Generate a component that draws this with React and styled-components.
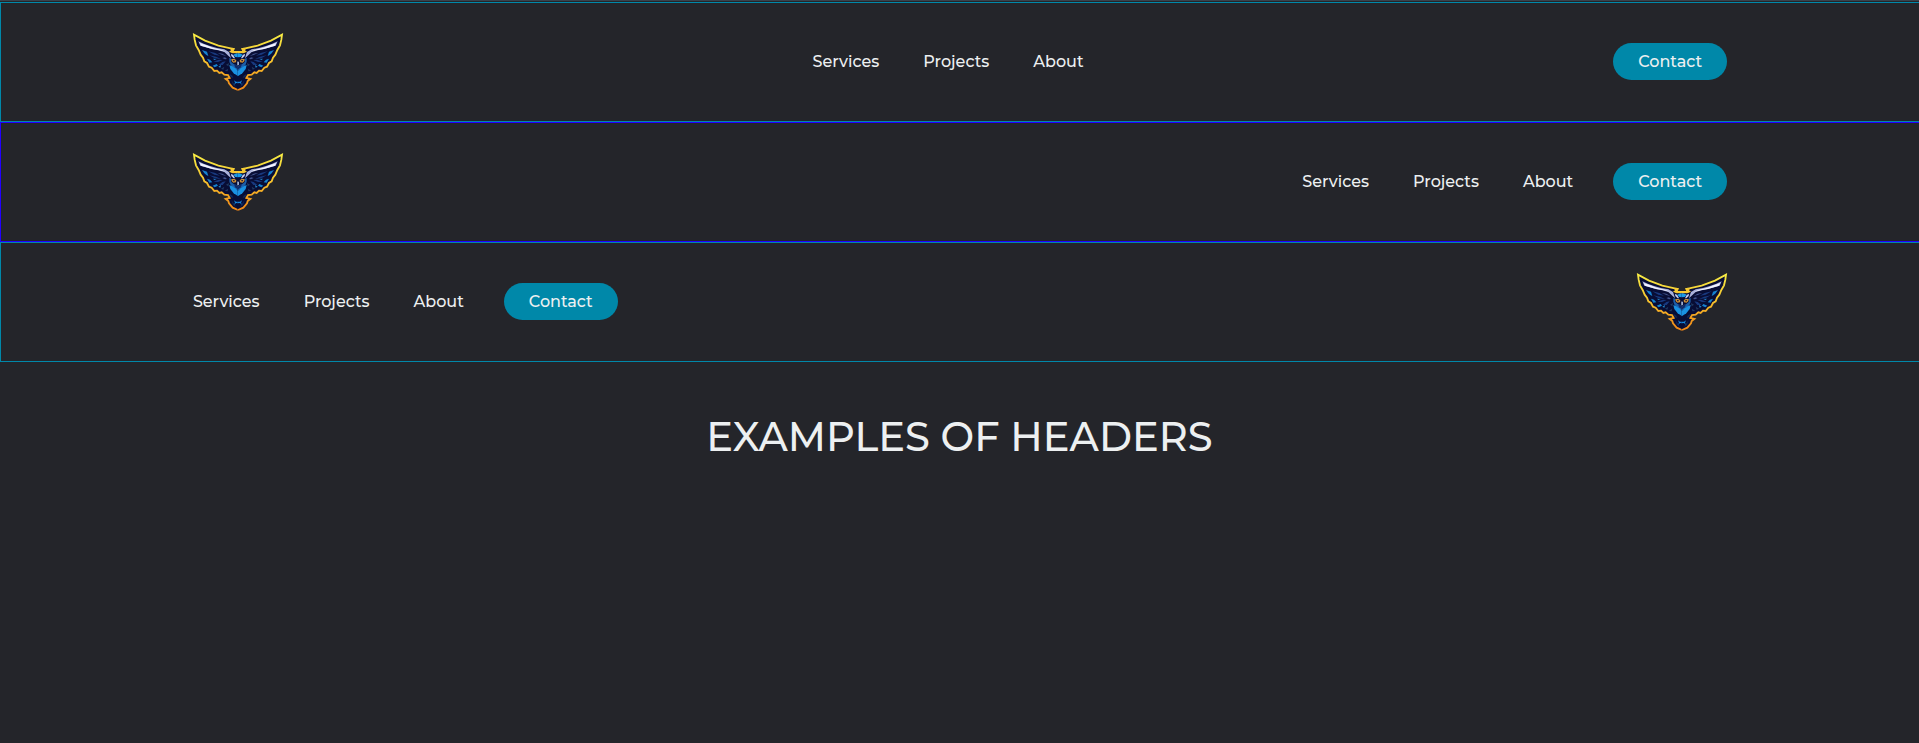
import React from "react";
import styled, { createGlobalStyle } from "styled-components";

const GlobalStyle = createGlobalStyle`
  * { box-sizing: border-box; margin: 0; padding: 0; }
  body {
    background: #24252a;
    color: #edf0f1;
    font-family: Montserrat, Inter, "Liberation Sans", sans-serif;
    font-weight: 500;
    font-size: 16px;
  }
`;

const Page = styled.div`
  min-height: 100vh;
  padding-top: 1px;
  border-top: 1px solid #3a424b;
`;

const Header = styled.header`
  display: flex;
  align-items: center;
  justify-content: ${(p) => (p.$split ? "space-between" : "flex-start")};
  height: 120px;
  padding: 0 10% 1px;
  border: 1px solid ${(p) => p.$line};
  border-right: 0;
`;

const LogoLink = styled.a`
  display: block;
  margin-right: ${(p) => (p.$pushRight ? "auto" : "0")};
  margin-left: ${(p) => (p.$pushLeft ? "auto" : "0")};
  svg { display: block; width: 90px; height: 57px; overflow: visible; }
`;

const NavList = styled.ul`
  display: flex;
  gap: 44px;
  list-style: none;
`;

const NavLink = styled.a`
  display: block;
  color: #edf0f1;
  font-size: 16px;
  line-height: 19px;
  text-decoration: none;
`;

const Contact = styled.button`
  height: 37px;
  padding: 0 25px;
  margin-left: ${(p) => (p.$spaced ? "40px" : "0")};
  border: none;
  border-radius: 50px;
  background: #0088a9;
  color: #edf0f1;
  font: inherit;
  cursor: pointer;
`;

const Title = styled.h1`
  margin-top: 50px;
  font-size: 40px;
  line-height: 50px;
  font-weight: 500;
  text-align: center;
`;

const OUTLINE =
  "M159 82 L142 79 L146 71 L137 69 L100 61 L60 46 L27 28 L29 43 L33 60 L41 74 L47 88 L54 97 L58 108 L66 113 L72 124 L80 127 L88 137 L96 136 L103 143 L110 141 L118 148 L129 149 L134 158 L122 161 L130 167 L132 174 L143 187 L159 194";

function Half() {
  return (
    <g>
      <path d={`${OUTLINE} H160 V82Z`} fill="#080d35" />
      <path d={OUTLINE} fill="none" stroke="url(#gold)" strokeWidth="5.5" strokeLinejoin="miter" />
      <path d="M134 68 L149 70 L144 77 L160 77 L160 83 L143 84 L132 79 L138 75Z" fill="#f6c832" />
      <path d="M40 48 L56 55 L75 62 L96 68 L118 72 L132 80 L136 92 L138 99 L130 91 L118 80 L100 75 L80 71 L60 65 L46 61Z" fill="#a9b0da" />
      <path d="M44 53 L62 59 L83 67 L108 73 L122 79 L104 75 L82 71 L58 64 L48 61Z" fill="#f3f4ff" />
      <path d="M138 85 L145 89 L150 99 L146 99 L139 92Z" fill="#c4cbee" />
      <path d="M51 74 L66 79 L70 92 L64 89 L58 84Z M66 100 L75 103 L82 111 L73 112Z M83 121 L95 116 L99 121 L89 126Z" fill="#1581cf" />
      <path d="M70 78 L91 83 L105 91 L88 88Z M73 90 L93 94 L108 101 L89 99Z M85 109 L102 103 L113 104 L99 110Z M101 119 L112 110 L122 108 L113 119Z" fill="#18397f" />
      <path d="M98 83 L112 85 L124 92 L112 89Z M112 98 L120 96 L126 101 L120 102Z" fill="#43548f" />
      <path d="M84 100 L95 101 L88 104Z M100 124 L108 119 L106 127Z" fill="#2387ca" />
      <path d="M108 130 L118 124 L115 133Z M119 137 L129 130 L128 138Z M123 118 L132 113 L130 123Z" fill="#20395f" />
      <path d="M133 145 L142 151 L145 158 L137 155Z M139 164 L146 174 L153 185 L144 179Z" fill="#122858" />
      <path d="M145 88 L151 85 L160 84 L160 96 L151 95Z" fill="#1a9ae8" />
      <path d="M133 98 L139 100 L138 109 L146 116 L154 119 L160 125 L160 137 L151 130 L137 120 L133 109Z" fill="#1c5da8" />
      <path d="M133 119 L142 123 L151 129 L160 137 L160 153 L146 144 L136 131Z" fill="#1a91e2" />
      <path d="M147 117 L155 120 L160 127 L160 133 L151 126Z" fill="#122a68" />
      <path d="M139 101 L149 101 L154 105 L153 111 L145 112 L140 108Z" fill="#c98d35" />
      <path d="M144 104 H149 V108 H144Z" fill="#2c223a" />
      <path d="M156 110 L160 108 L160 121 L156 118Z" fill="#9eafd2" />
      <path d="M147 165 L153 169 L160 169 L160 174 L153 173 L147 179 L150 172Z" fill="#1688de" />
    </g>
  );
}

function Logo() {
  return (
    <svg viewBox="24 23 270 171" role="img" aria-label="Owl logo">
      <defs>
        <linearGradient id="gold" gradientUnits="userSpaceOnUse" x1="0" y1="24" x2="0" y2="198">
          <stop offset="0" stopColor="#f7ed45" />
          <stop offset="0.45" stopColor="#f5c52f" />
          <stop offset="1" stopColor="#ef8415" />
        </linearGradient>
      </defs>
      <Half />
      <g transform="translate(318 0) scale(-1 1)">
        <Half />
      </g>
    </svg>
  );
}

function Brand(props) {
  return (
    <LogoLink href="#" aria-label="Home" {...props}>
      <Logo />
    </LogoLink>
  );
}

function Nav() {
  return (
    <nav>
      <NavList>
        {["Services", "Projects", "About"].map((name) => (
          <li key={name}>
            <NavLink href="#">{name}</NavLink>
          </li>
        ))}
      </NavList>
    </nav>
  );
}

export default function App() {
  return (
    <Page>
      <GlobalStyle />
      <Header $split $line="#0088a9">
        <Brand />
        <Nav />
        <Contact>Contact</Contact>
      </Header>
      <Header $line="#2200ff">
        <Brand $pushRight />
        <Nav />
        <Contact $spaced>Contact</Contact>
      </Header>
      <Header $line="#0088a9">
        <Nav />
        <Contact $spaced>Contact</Contact>
        <Brand $pushLeft />
      </Header>
      <Title>EXAMPLES OF HEADERS</Title>
    </Page>
  );
}
